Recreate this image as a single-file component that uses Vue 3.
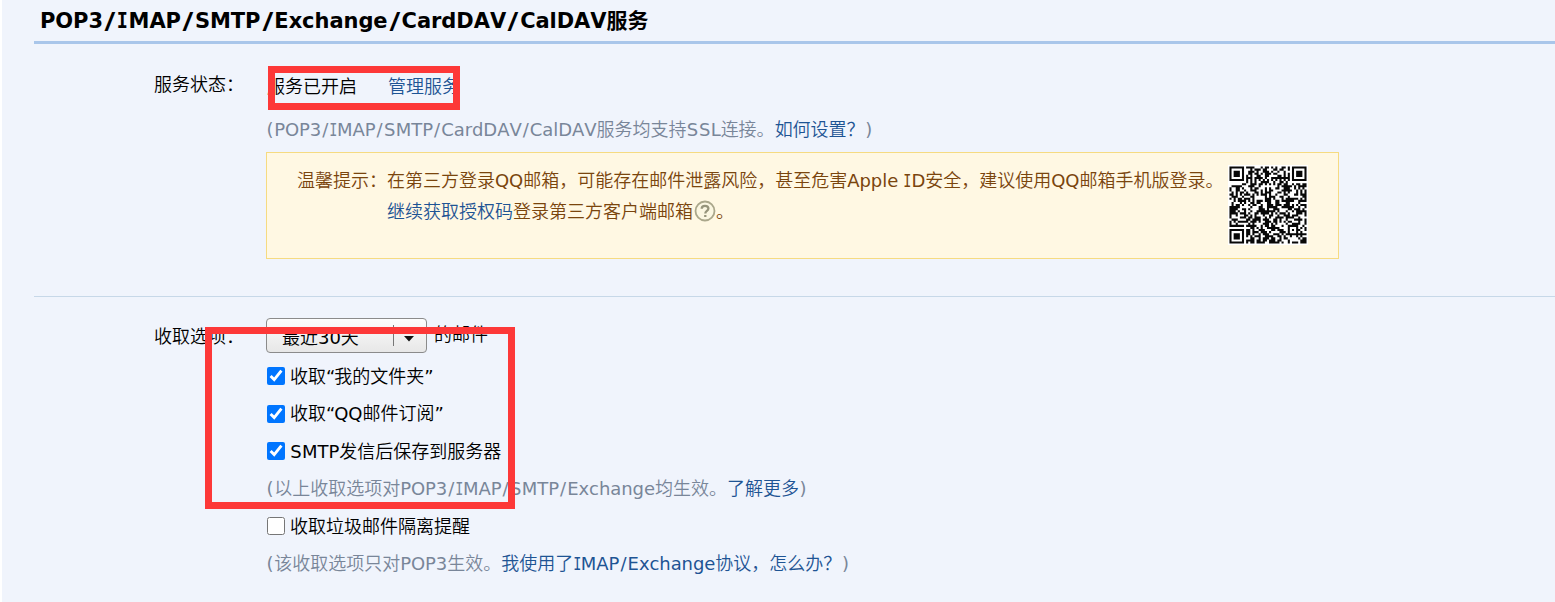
<script setup>
import { ref, h } from 'vue'

const kinds = { '/': 'slash', I: 'serif-i', '(': 'paren', ')': 'paren', '“': 'quote', '”': 'quote', S: 'cap-s' }

// Splits mixed text into runs so Chinese and Latin can be spaced separately.
const Mixed = (props) =>
  h(
    'span',
    { class: 'mixed' },
    (props.text.match(/[\u2e80-\uffef]+|[/IS()“”]|[^\u2e80-\uffef/IS()“”]+/g) || []).map((run) =>
      h('span', { class: kinds[run] || (/[\u2e80-\uffef]/.test(run) ? 'cjk' : 'latin') }, run)
    )
  )
Mixed.props = ['text']

const folders = ref(true)
const subscriptions = ref(true)
const saveSent = ref(true)
const spamNotice = ref(false)

const size = 37
function buildQr() {
  let seed = 20931
  const finder = (x, y) => {
    const ring = Math.max(Math.abs(x - 3), Math.abs(y - 3))
    return ring === 3 || ring <= 1
  }
  let path = ''
  for (let y = 0; y < size; y++) {
    for (let x = 0; x < size; x++) {
      seed = (seed * 1103515245 + 12345) % 2147483648
      let on = (seed >> 16) % 100 < 54
      const right = x >= size - 8
      const bottom = y >= size - 8
      if (x < 8 && y < 8) on = x < 7 && y < 7 && finder(x, y)
      else if (right && y < 8) on = x > size - 8 && y < 7 && finder(x - size + 7, y)
      else if (x < 8 && bottom) on = x < 7 && y > size - 8 && finder(x, y - size + 7)
      else if (x === 6 || y === 6) on = (x + y) % 2 === 0
      else if (Math.abs(x - 30) < 3 && Math.abs(y - 30) < 3)
        on = Math.max(Math.abs(x - 30), Math.abs(y - 30)) !== 1
      if (on) path += `M${x} ${y}h1v1h-1z`
    }
  }
  return path
}
const qrPath = buildQr()
</script>

<template>
  <main class="page">
    <h1 class="title"><Mixed text="POP3/IMAP/SMTP/Exchange/CardDAV/CalDAV服务" /></h1>

    <section class="group status">
      <div class="label"><Mixed text="服务状态：" /></div>
      <div class="content">
        <div class="state">
          <Mixed text="服务已开启" />
          <a class="link"><Mixed text="管理服务" /></a>
          <div class="mark mark-state"></div>
        </div>
        <div class="hint ssl">
          <Mixed text="(POP3/IMAP/SMTP/CardDAV/CalDAV服务均支持SSL连接。" /><a class="link"><Mixed text="如何设置？" /></a><Mixed text=")" />
        </div>
        <div class="notice">
          <div class="notice-label"><Mixed text="温馨提示：" /></div>
          <div class="notice-text">
            <div><Mixed text="在第三方登录QQ邮箱，可能存在邮件泄露风险，甚至危害Apple ID安全，建议使用QQ邮箱手机版登录。" /></div>
            <div class="second">
              <a class="link"><Mixed text="继续获取授权码" /></a><Mixed text="登录第三方客户端邮箱" />
              <svg class="help" viewBox="0 0 22 22">
                <circle cx="11" cy="11" r="9.5" fill="#fbf7e2" stroke="#aaa78b" stroke-width="1.8" />
                <path d="M7.7 8.8C7.7 6.8 9.1 5.8 11 5.8s3.4 1.1 3.4 2.8c0 2.3-3.1 2.3-3.1 4.8M11.3 14.9v2.1" fill="none" stroke="#96947b" stroke-width="2.3" />
              </svg>
              <Mixed text="。" />
            </div>
          </div>
          <svg class="qr" viewBox="-0.7 -0.7 38.4 38.4">
            <rect x="-0.7" y="-0.7" width="38.4" height="38.4" fill="#fff" />
            <path :d="qrPath" fill="#080808" />
          </svg>
        </div>
      </div>
    </section>

    <section class="group options">
      <div class="label"><Mixed text="收取选项：" /></div>
      <div class="content">
        <div class="range">
          <button class="select" type="button">
            <Mixed text="最近30天" />
            <span class="split"></span>
            <svg class="caret" viewBox="0 0 10 6"><path d="M0 0h10L5 5.5z" fill="#111" /></svg>
          </button>
          <Mixed class="suffix" text="的邮件" />
        </div>
        <label class="row"><input v-model="folders" type="checkbox" /><Mixed text="收取“我的文件夹”" /></label>
        <label class="row"><input v-model="subscriptions" type="checkbox" /><Mixed text="收取“QQ邮件订阅”" /></label>
        <label class="row"><input v-model="saveSent" type="checkbox" /><Mixed text="SMTP发信后保存到服务器" /></label>
        <div class="row hint">
          <Mixed text="(以上收取选项对POP3/IMAP/SMTP/Exchange均生效。" /><a class="link"><Mixed text="了解更多" /></a><Mixed text=")" />
        </div>
        <label class="row"><input v-model="spamNotice" type="checkbox" /><Mixed text="收取垃圾邮件隔离提醒" /></label>
        <div class="row hint">
          <Mixed text="(该收取选项只对POP3生效。" /><a class="link"><Mixed text="我使用了IMAP/Exchange协议，怎么办？" /></a><Mixed text=")" />
        </div>
      </div>
      <div class="mark mark-options"></div>
    </section>
  </main>
</template>

<style>
html, body { background: #fff; }
</style>

<style scoped>
.page {
  box-sizing: border-box;
  height: 602px;
  margin-left: 2px;
  padding-left: 32px;
  overflow: hidden;
  background: #f0f4fc;
  color: #000;
  font: 18px/30px "DejaVu Sans", "Noto Sans CJK SC", sans-serif;
  font-kerning: none;
}
.page :deep(.mixed) { white-space: nowrap; }
.page :deep(.cjk) { font-family: "Noto Sans CJK SC", sans-serif; font-weight: 350; line-height: 1; }
.page :deep(.slash), .page :deep(.paren) { display: inline-block; width: .454em; line-height: 1; text-align: center; }
.page :deep(.quote) { display: inline-block; width: .459em; line-height: 1; }
.page :deep(.cap-s) { display: inline-block; width: .67em; line-height: 1; text-align: center; }
.page :deep(.latin) { letter-spacing: -.06px; }
.page :deep(.serif-i) {
  display: inline-block;
  margin: 0 -.0905em;
  font-family: "DejaVu Sans Mono", monospace;
  line-height: 1;
  transform: scaleX(.75);
}
.title {
  box-sizing: border-box;
  height: 44px;
  margin: 0;
  padding: 6px 0 0 6px;
  border-bottom: 3px solid #a9c6ea;
  font-size: 21px;
  font-weight: 700;
  line-height: 30px;
}
.title :deep(.cjk) { font-weight: 700; }
.title :deep(.slash) { width: .365em; margin: 0 .152em; transform: scale(1.4, 1.08); }
.title :deep(.cap-s) { width: .711em; }
.title :deep(.serif-i) { margin: 0 -.028em; transform: scaleX(.88); }
.link { color: #1e5494; }
.hint { color: #798699; }
.group { position: relative; display: flex; }
.label { width: 112px; margin-left: 120px; flex: none; }
.status { box-sizing: border-box; height: 253px; border-bottom: 1px solid #c7d8e8; }
.status .label { padding-top: 26px; }
.state { position: relative; display: flex; gap: 31px; height: 30px; margin-top: 28px; padding-left: 1px; }
.ssl { margin-top: 13px; height: 30px; }
.notice {
  box-sizing: border-box;
  display: flex;
  width: 1073px;
  height: 107px;
  margin-top: 7px;
  padding: 13px 0 0 30px;
  border: 1px solid #f6db81;
  background: #fff8e3;
  color: #7a450d;
}
.notice-label { width: 90px; flex: none; }
.notice-text { width: 841px; flex: none; }
.second { display: flex; margin-top: .5px; }
.help { width: 22px; height: 22px; margin: 3px 0 0 1px; }
.qr { width: 80px; height: 80px; margin-top: -1px; flex: none; }
.options .label { padding-top: 25px; }
.range { display: flex; height: 35px; margin: 21px 0 5px; }
.select {
  box-sizing: border-box;
  display: flex;
  align-items: center;
  width: 161px;
  height: 35px;
  padding: 5px 0 0 15px;
  border: 1px solid #8b8b8b;
  border-radius: 4px;
  background: linear-gradient(#fdfdfd, #e7e7e7);
  color: #000;
  font: inherit;
}
.select .mixed { width: 111px; text-align: left; }
.split { width: 1px; height: 21px; margin-top: -6px; background: #777; }
.caret { width: 10px; height: 6px; margin-left: 10px; margin-top: 1px; }
.suffix { margin: 2px 0 0 7px; }
.row { display: flex; align-items: center; height: 37.5px; }
.row input { width: 18px; height: 18px; margin: -1px 5px 0 1px; flex: none; accent-color: #0075ff; }
.mark { position: absolute; box-sizing: border-box; border: 7px solid #fd3838; pointer-events: none; }
.mark-state { left: 2px; top: -6px; width: 192px; height: 44px; }
.mark-options { left: 171px; top: 30px; width: 310px; height: 182px; }
</style>
